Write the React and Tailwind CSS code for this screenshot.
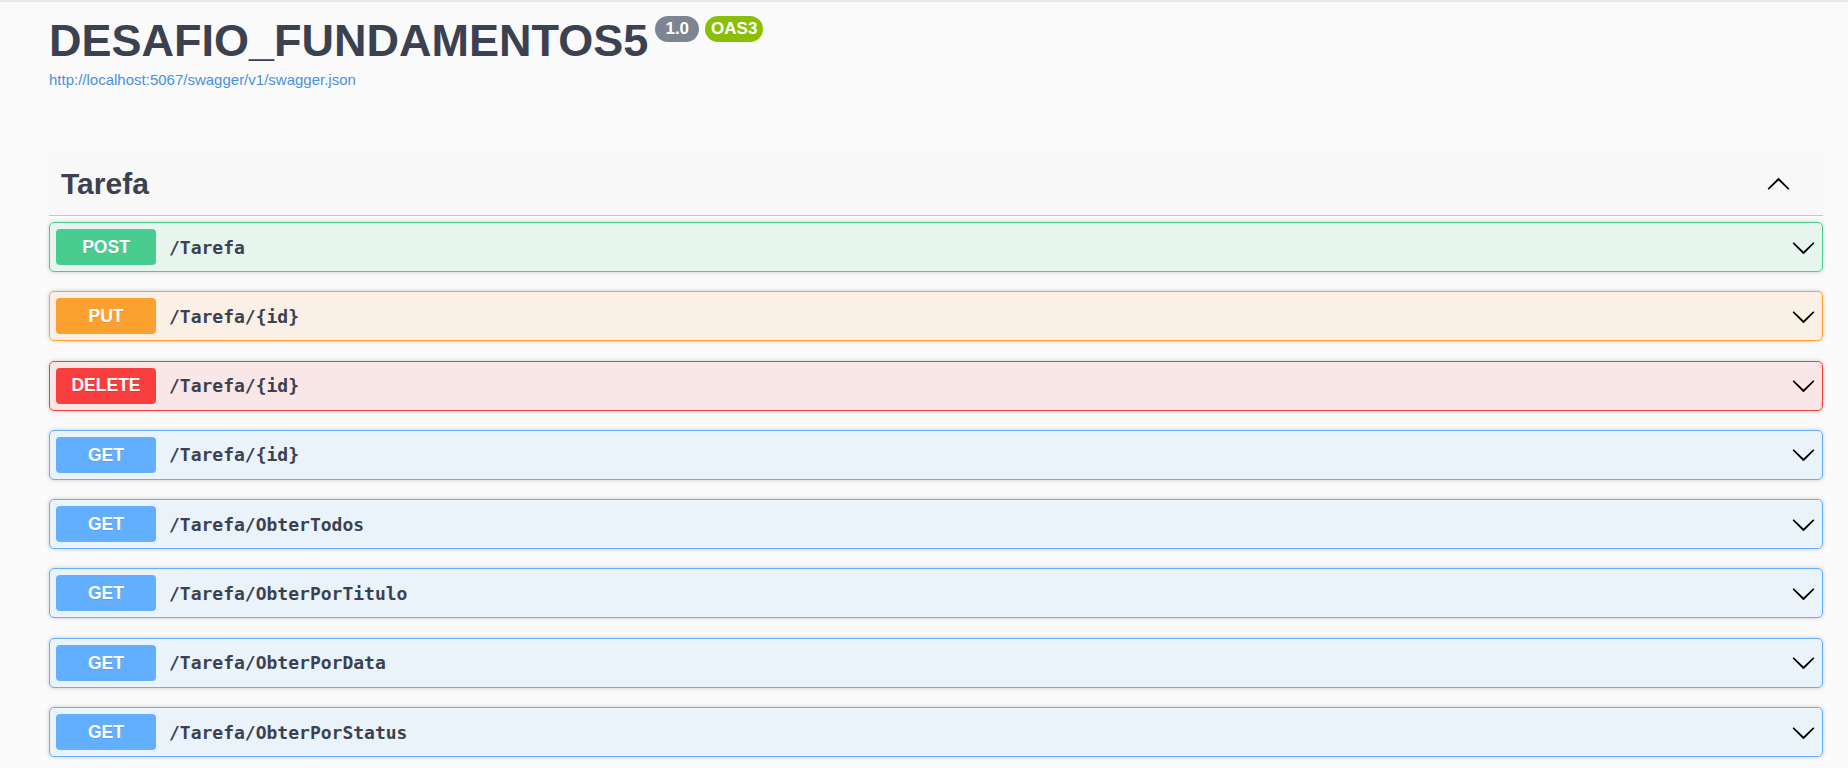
const OPERATIONS = [
  { method: 'POST', path: '/Tarefa' },
  { method: 'PUT', path: '/Tarefa/{id}' },
  { method: 'DELETE', path: '/Tarefa/{id}' },
  { method: 'GET', path: '/Tarefa/{id}' },
  { method: 'GET', path: '/Tarefa/ObterTodos' },
  { method: 'GET', path: '/Tarefa/ObterPorTitulo' },
  { method: 'GET', path: '/Tarefa/ObterPorData' },
  { method: 'GET', path: '/Tarefa/ObterPorStatus' },
];

const methodStyles = {
  POST: { block: 'border-[#49cc90] bg-[#49cc90]/10', badge: 'bg-[#49cc90]' },
  PUT: { block: 'border-[#fca130] bg-[#fca130]/10', badge: 'bg-[#fca130]' },
  DELETE: { block: 'border-[#f93e3e] bg-[#f93e3e]/10', badge: 'bg-[#f93e3e]' },
  GET: { block: 'border-[#61affe] bg-[#61affe]/10', badge: 'bg-[#61affe]' },
};

const Arrow = ({ up = false }) => (
  <svg
    width="25"
    height="25"
    viewBox="0 0 20 20"
    className={up ? 'rotate-180' : ''}
    aria-hidden="true"
  >
    <path
      fill="#000"
      d="M17.418 6.109c.272-.268.709-.268.979 0s.271.701 0 .969l-7.908 7.83c-.27.268-.707.268-.979 0l-7.908-7.83c-.27-.268-.27-.701 0-.969.271-.268.709-.268.979 0L10 13.25l7.418-7.141z"
    />
  </svg>
);

function OperationRow({ method, path }) {
  const style = methodStyles[method];
  return (
    <div
      className={`mb-[19.3px] flex h-[50px] items-center rounded-[5px] border px-[6px] shadow-[0_0_4px_rgba(0,0,0,0.19)] ${style.block}`}
    >
      <span
        className={`flex h-[36px] w-[100px] shrink-0 items-center justify-center rounded-[4px] text-[17.5px] font-bold text-white [text-shadow:0_1px_0_rgba(0,0,0,0.1)] ${style.badge}`}
      >
        {method}
      </span>
      <span className="flex-1 px-[13px] font-['DejaVu_Sans_Mono',monospace] text-[18px] font-semibold text-[#3b4151]">
        {path}
      </span>
      <Arrow />
    </div>
  );
}

export default function App() {
  return (
    <div className="min-h-screen border-t-2 border-[#e9e9e9] bg-[#fafafa] font-['Liberation_Sans',Arial,sans-serif] text-[#3b4151]">
      <div className="pl-[49px] pr-[25px]">
        <div className="pt-[16px]">
          <div className="flex items-start">
            <h2 className="text-[45px] font-bold leading-none text-[#3b4151]">DESAFIO_FUNDAMENTOS5</h2>
            <span className="ml-[7px] mt-[-2px] flex h-[26px] w-[44px] items-center justify-center rounded-full bg-[#7d8492] text-[17px] font-bold text-white">
              1.0
            </span>
            <span className="ml-[6px] mt-[-2px] flex h-[26px] w-[58px] items-center justify-center rounded-full bg-[#89bf04] text-[17px] font-bold text-white">
              OAS3
            </span>
          </div>
          <a
            href="#"
            className="mt-[8px] block w-fit text-[15px] leading-[18px] text-[#4990e2]"
          >
            http://localhost:5067/swagger/v1/swagger.json
          </a>
        </div>

        <div className="mt-[64px]">
          <div className="flex h-[63px] items-center border-b border-[#c5c6ca] bg-black/[0.007] pl-[12px] pr-[32px]">
            <h3 className="flex-1 text-[30px] font-bold leading-[30px]">Tarefa</h3>
            <Arrow up />
          </div>
          <div className="pt-[6px]">
            {OPERATIONS.map((op, i) => (
              <OperationRow key={i} method={op.method} path={op.path} />
            ))}
          </div>
        </div>
      </div>
    </div>
  );
}
